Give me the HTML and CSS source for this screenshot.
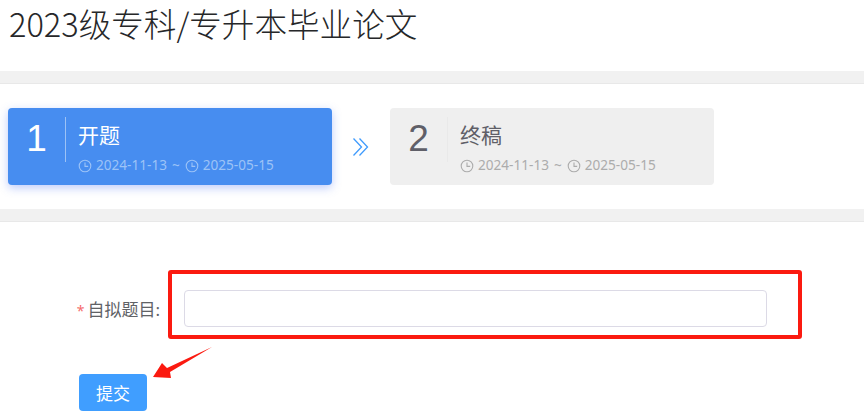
FILE: index.html
```html
<!DOCTYPE html>
<html lang="zh-CN">
<head>
    <meta charset="UTF-8">
    <title>毕业论文</title>
    <link rel="stylesheet" href="styles.css">
</head>
<body>
    <h1 class="title">2023级专科/专升本毕业论文</h1>
    <div class="divider"></div>
    <div class="steps">
        <div class="step active">
            <span class="num">1</span>
            <div class="info">
                <p class="name">开题</p>
                <p class="time">
                    <svg class="clock" viewBox="0 0 14 14"><circle cx="7" cy="7" r="5.8"/><path d="M7 3.6V7.4H10.2"/></svg>
                    <span>2024-11-13</span><span class="tilde">~</span>
                    <svg class="clock" viewBox="0 0 14 14"><circle cx="7" cy="7" r="5.8"/><path d="M7 3.6V7.4H10.2"/></svg>
                    <span>2025-05-15</span>
                </p>
            </div>
        </div>
        <svg class="next" viewBox="0 0 18 20"><path d="M1.5 1.5L9.5 10L1.5 18.500M7.500 1.500L15.500 10L7.500 18.500"/></svg>
        <div class="step">
            <span class="num">2</span>
            <div class="info">
                <p class="name">终稿</p>
                <p class="time">
                    <svg class="clock" viewBox="0 0 14 14"><circle cx="7" cy="7" r="5.8"/><path d="M7 3.6V7.4H10.2"/></svg>
                    <span>2024-11-13</span><span class="tilde">~</span>
                    <svg class="clock" viewBox="0 0 14 14"><circle cx="7" cy="7" r="5.8"/><path d="M7 3.6V7.4H10.2"/></svg>
                    <span>2025-05-15</span>
                </p>
            </div>
        </div>
    </div>
    <div class="divider"></div>
    <form class="form">
        <div class="row">
            <label class="label"><i>*</i>自拟题目:</label>
            <input class="field" type="text">
        </div>
        <button class="submit" type="button">提交</button>
    </form>

    <!-- annotations drawn over the page -->
    <div class="redbox"></div>
    <svg class="arrow" viewBox="0 0 65 36"><path d="M3 32L12 18L17 23L62 2L20 27L21 33Z"/></svg>
</body>
</html>
```

FILE: styles.css
```css
*{
    margin: 0;
    padding: 0;
    box-sizing: border-box;
}
body{
    position: relative;
    height: 413px;
    overflow: hidden;
    background: #fff;
    font-family: "Noto Sans","Noto Sans CJK SC",sans-serif;
}
.title{
    height: 71px;
    padding: 4px 0 0 9px;
    font-family: "Noto Sans CJK SC",sans-serif;
    font-size: 32.6px;
    line-height: 38px;
    font-weight: 300;
    color: #262729;
}
.divider{
    height: 13px;
    background: #f1f1f1;
    border-bottom: 1px solid #e8e8e8;
}
.steps{
    display: flex;
    align-items: center;
    height: 125px;
    padding-left: 8px;
}
.step{
    display: flex;
    width: 324px;
    height: 77px;
    padding: 9px 0 0 0;
    background: #efefef;
    border-radius: 4px;
    color: #5f5f68;
}
.step.active{
    background: #478df0;
    color: #fff;
    box-shadow: 0 3px 10px rgba(71,110,240,.35);
}
.num{
    width: 58px;
    height: 45px;
    border-right: 1px solid #e9e9e9;
    font-family: "Liberation Sans",sans-serif;
    font-size: 37px;
    line-height: 44px;
    text-align: center;
}
.step.active .num{
    border-right-color: #9cc2f6;
}
.info{
    padding-left: 12px;
}
.name{
    font-size: 21px;
    line-height: 36px;
    height: 38px;
}
.time{
    display: flex;
    align-items: center;
    margin-top: 1px;
    font-family: "Noto Sans",sans-serif;
    font-size: 13.6px;
    line-height: 18px;
    color: #acacac;
}
.step.active .time{
    color: #9cc3f7;
}
.clock{
    width: 14px;
    height: 14px;
    margin: 2px 4px 0 0;
    fill: none;
    stroke: currentColor;
    stroke-width: 1.1;
}
.tilde{
    margin: 0 5px;
}
.next{
    width: 18px;
    height: 20px;
    margin: 0 20px;
    fill: none;
    stroke: #3f9bfd;
    stroke-width: 1.3;
}
.form{
    padding: 68px 0 0 0;
}
.row{
    display: flex;
    align-items: center;
    height: 37px;
}
.label{
    width: 184px;
    padding-right: 24px;
    text-align: right;
    font-size: 17px;
    color: #606266;
}
.label i{
    margin-right: 3px;
    font-style: normal;
    font-size: 14px;
    color: #f56c6c;
}
.field{
    width: 583px;
    height: 37px;
    border: 1px solid #dcdae6;
    border-radius: 4px;
    outline: 0;
}
.submit{
    display: block;
    width: 68px;
    height: 37px;
    margin: 47px 0 0 79px;
    border: 0;
    border-radius: 4px;
    background: #409eff;
    color: #fff;
    font-family: inherit;
    font-size: 17px;
}
.redbox{
    position: absolute;
    left: 168px;
    top: 270px;
    width: 634px;
    height: 69px;
    border: 4px solid #fb1a10;
    border-radius: 3px;
}
.arrow{
    position: absolute;
    left: 150px;
    top: 345px;
    width: 65px;
    height: 36px;
    fill: #fb1a10;
}
```
